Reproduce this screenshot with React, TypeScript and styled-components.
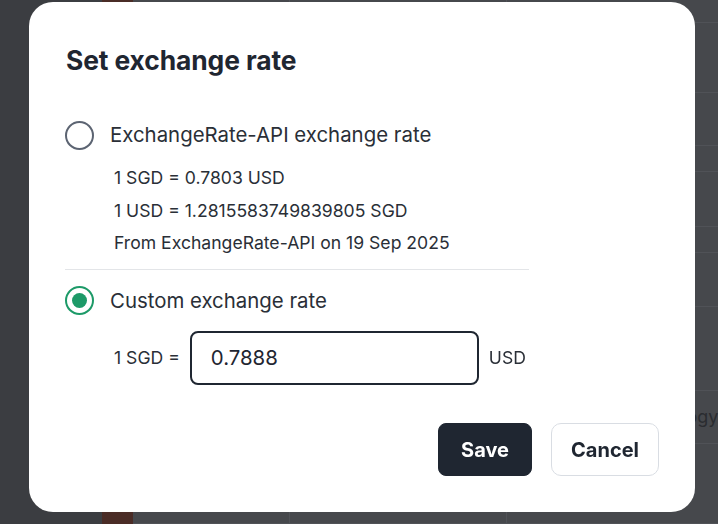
import { useState } from "react";
import styled, { createGlobalStyle } from "styled-components";

const GlobalStyle = createGlobalStyle`
  html, body {
    margin: 0;
    padding: 0;
    height: 100%;
  }
  body {
    font-family: Inter, "Noto Sans", "Liberation Sans", sans-serif;
    background: #46484c;
    overflow: hidden;
  }
`;

const bgRows = [22, 70, 53, 25, 55, 25, 53, 84, 53, 80];

export default function App() {
  const [mode, setMode] = useState<"api" | "custom">("custom");
  const [rate, setRate] = useState("0.7888");

  return (
    <>
      <GlobalStyle />
      <Page>
        <Sidebar />
        <Thumb />
        <Table>
          {bgRows.map((h, i) => (
            <BgRow key={i} style={{ height: h }}>
              <BgCell />
              <BgCell>{i === 0 ? "Invoice is" : i === bgRows.length - 1 ? "Supplier Tax ID" : ""}</BgCell>
              <BgCell $indent={i === 8 ? 112 : 21}>{i === 0 ? "0000" : i === 8 ? "Technology" : ""}</BgCell>
            </BgRow>
          ))}
        </Table>
      </Page>

      <Overlay>
        <Modal>
          <Title>Set exchange rate</Title>

          <Options>
            <Option onClick={() => setMode("api")}>
              <Radio $checked={mode === "api"} />
              <OptionLabel>ExchangeRate-API exchange rate</OptionLabel>
            </Option>
            <Details>
              <DetailLine>1 SGD = 0.7803 USD</DetailLine>
              <DetailLine>1 USD = 1.2815583749839805 SGD</DetailLine>
              <DetailLine>From ExchangeRate-API on 19 Sep 2025</DetailLine>
            </Details>

            <Divider />

            <Option onClick={() => setMode("custom")}>
              <Radio $checked={mode === "custom"} />
              <OptionLabel>Custom exchange rate</OptionLabel>
            </Option>
            <RateRow>
              <RateText>1 SGD =</RateText>
              <RateInput
                value={rate}
                onChange={(e) => setRate(e.target.value)}
                autoFocus
              />
              <RateText>USD</RateText>
            </RateRow>
          </Options>

          <Actions>
            <Button $primary>Save</Button>
            <Button>Cancel</Button>
          </Actions>
        </Modal>
      </Overlay>
    </>
  );
}

const Page = styled.div`
  display: flex;
  height: 100vh;
  background: #46484c;
`;

const Sidebar = styled.div`
  width: 102px;
  background: #3b3d41;
`;

const Thumb = styled.div`
  width: 31px;
  background: #4a2c26;
`;

const Table = styled.div`
  flex: 1;
  display: flex;
  flex-direction: column;
`;

const BgRow = styled.div`
  display: grid;
  grid-template-columns: 157px 217px 1fr;
  border-bottom: 1px solid #505257;
`;

const BgCell = styled.div<{ $indent?: number }>`
  display: flex;
  align-items: center;
  padding-left: ${(p) => p.$indent ?? 38}px;
  border-right: 1px solid #505257;
  color: #2a2c30;
  font-size: 18px;
  white-space: nowrap;
  overflow: hidden;
  &:last-child {
    border-right: none;
  }
`;

const Overlay = styled.div`
  position: fixed;
  inset: 0;
  display: flex;
  align-items: flex-start;
  justify-content: center;
  padding-top: 2px;
  padding-left: 6px;
`;

const Modal = styled.div`
  width: 666px;
  height: 510px;
  box-sizing: border-box;
  background: #ffffff;
  border-radius: 24px;
  padding: 42px 36px 36px 36px;
  display: flex;
  flex-direction: column;
`;

const Title = styled.h2`
  margin: 0 0 0 1px;
  font-size: 26.4px;
  line-height: 32px;
  font-weight: 700;
  letter-spacing: -0.1px;
  color: #1f2631;
`;

const Options = styled.div`
  margin-top: 44px;
  width: 464px;
  display: flex;
  flex-direction: column;
`;

const Option = styled.label`
  display: flex;
  align-items: center;
  gap: 16px;
  cursor: pointer;
`;

const Radio = styled.span<{ $checked?: boolean }>`
  width: 29px;
  height: 29px;
  box-sizing: border-box;
  border-radius: 50%;
  border: 2px solid ${(p) => (p.$checked ? "#1d9a68" : "#5c6472")};
  display: flex;
  align-items: center;
  justify-content: center;
  flex-shrink: 0;
  &::after {
    content: "";
    width: 15px;
    height: 15px;
    border-radius: 50%;
    background: #1d9a68;
    display: ${(p) => (p.$checked ? "block" : "none")};
  }
`;

const OptionLabel = styled.span`
  font-size: 20.4px;
  line-height: 30px;
  color: #2a2f37;
`;

const Details = styled.div`
  margin: 12px 0 0 49px;
  display: flex;
  flex-direction: column;
`;

const DetailLine = styled.div`
  font-size: 17.6px;
  line-height: 32.5px;
  color: #2a2f37;
`;

const Divider = styled.div`
  height: 1px;
  background: #e3e5e8;
  margin: 9px 0 16px;
`;

const RateRow = styled.div`
  display: flex;
  align-items: center;
  margin: 15px 0 0 49px;
  gap: 10px;
`;

const RateText = styled.span`
  font-size: 17.6px;
  color: #2a2f37;
  white-space: nowrap;
  flex-shrink: 0;
`;

const RateInput = styled.input`
  width: 289px;
  height: 54px;
  flex-shrink: 0;
  box-sizing: border-box;
  border: 2px solid #1f2631;
  border-radius: 8px;
  padding: 0 19px;
  font-family: inherit;
  font-size: 20.4px;
  color: #1f2631;
  outline: none;
  caret-color: #1f2631;
`;

const Actions = styled.div`
  margin-top: auto;
  display: flex;
  justify-content: flex-end;
  gap: 19px;
`;

const Button = styled.button<{ $primary?: boolean }>`
  height: 53px;
  padding: 0 ${(p) => (p.$primary ? "22px" : "19px")};
  border-radius: ${(p) => (p.$primary ? "8px" : "10px")};
  border: 1px solid ${(p) => (p.$primary ? "#1f2631" : "#d9dde3")};
  background: ${(p) => (p.$primary ? "#1f2631" : "#ffffff")};
  color: ${(p) => (p.$primary ? "#ffffff" : "#1f2631")};
  font-family: inherit;
  font-size: 20px;
  font-weight: 700;
  cursor: pointer;
`;
